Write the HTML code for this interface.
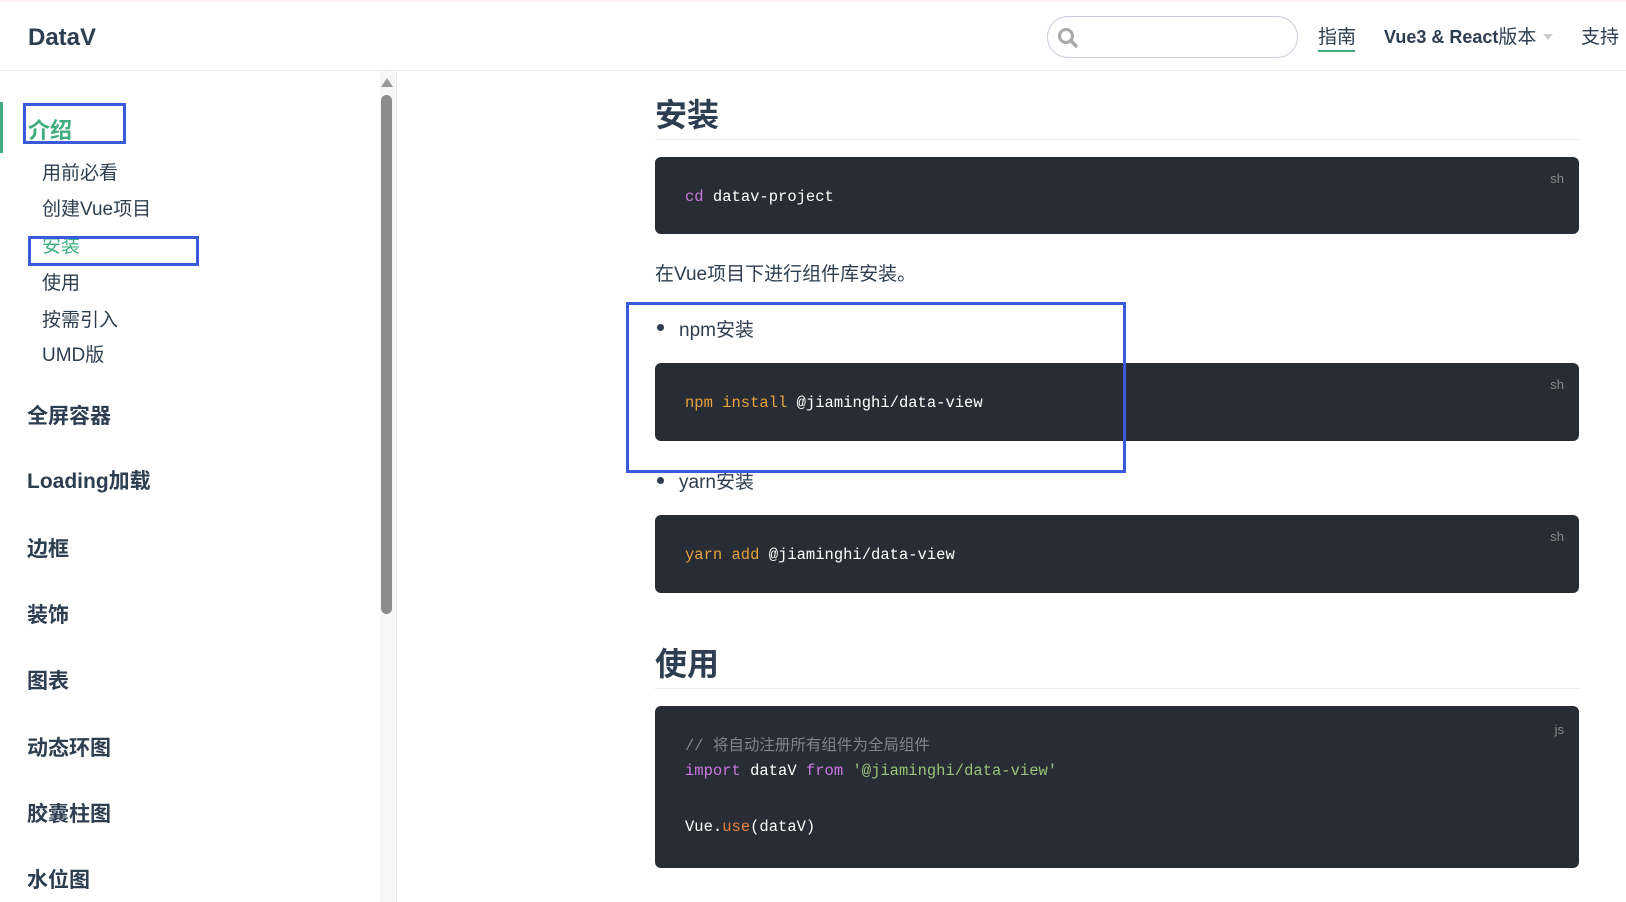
<!DOCTYPE html>
<html><head><meta charset="utf-8"><style>
*{margin:0;padding:0;box-sizing:border-box}
body{width:1626px;height:902px;overflow:hidden;background:#fff;font-family:"Liberation Sans","Noto Sans CJK SC",sans-serif;color:#2c3e50;position:relative}
.a{position:absolute;white-space:nowrap}
.hdr{position:absolute;left:0;top:0;width:1626px;height:71px;border-bottom:1px solid #eaecef;border-top:2px solid #fdf3f3}
.sub{font-size:19px;color:#2c3e50;left:42px;line-height:24px}
.sec{font-size:21px;font-weight:bold;left:27px;line-height:26px}
.code{position:absolute;left:655px;width:924px;background:#282c34;border-radius:6px;font-family:"Liberation Mono","Noto Sans CJK SC",monospace;font-size:15.5px;color:#fff}
.code .l{position:absolute;left:30px;white-space:pre}
.code .lang{position:absolute;right:15px;top:14px;font-size:13px;color:#888;font-family:"Liberation Sans",sans-serif}
.box{position:absolute;border:3px solid #3a5bd9}
.h2{font-size:32px;font-weight:bold;left:655px}
.hr{position:absolute;left:655px;width:924px;height:1px;background:#eaecef}
</style></head><body>
<div class="hdr"></div>
<div class="a" style="left:28px;top:24px;font-size:24px;font-weight:bold;color:#2c3e50">DataV</div>
<div class="a" style="left:1047px;top:16px;width:251px;height:42px;border:1px solid #ccd;border-radius:21px"></div>
<svg class="a" style="left:1057px;top:27px" width="22" height="22" viewBox="0 0 22 22"><circle cx="9" cy="9" r="6.5" fill="none" stroke="#aaa" stroke-width="3"/><line x1="13.5" y1="13.5" x2="19" y2="19" stroke="#aaa" stroke-width="3.5" stroke-linecap="round"/></svg>
<div class="a" style="left:1318px;top:22px;font-size:19px">指南</div>
<div class="a" style="left:1318px;top:50px;width:37px;height:2px;background:#3eaf7c"></div>
<div class="a" style="left:1384px;top:22px;font-size:18px;font-weight:bold">Vue3 &amp; React<span style="font-weight:normal;font-size:19px">版本</span></div>
<div class="a" style="left:1543px;top:34px;width:0;height:0;border-left:5px solid transparent;border-right:5px solid transparent;border-top:6px solid #ccc"></div>
<div class="a" style="left:1581px;top:22px;font-size:19px">支持</div>

<div class="a" style="left:396px;top:71px;width:1px;height:831px;background:#eaecef"></div>
<div class="a" style="left:380px;top:71px;width:15px;height:831px;background:#f7f7f7"></div>
<div class="a" style="left:381px;top:78px;width:0;height:0;border-left:6px solid transparent;border-right:6px solid transparent;border-bottom:9px solid #999"></div>
<div class="a" style="left:381px;top:95px;width:11px;height:519px;background:#8c8c8c;border-radius:6px"></div>

<div class="a" style="left:0;top:102px;width:3px;height:51px;background:#3eaf7c"></div>
<div class="a" style="left:28px;top:113px;font-size:22px;font-weight:bold;color:#3eaf7c">介绍</div>
<div class="box" style="left:23px;top:103px;width:103px;height:41px"></div>
<div class="a sub" style="top:162px">用前必看</div>
<div class="a sub" style="top:198px">创建Vue项目</div>
<div class="a sub" style="top:235px;color:#3eaf7c">安装</div>
<div class="box" style="left:28px;top:236px;width:171px;height:30px"></div>
<div class="a sub" style="top:272px">使用</div>
<div class="a sub" style="top:309px">按需引入</div>
<div class="a sub" style="top:344px">UMD版</div>
<div class="a sec" style="top:404px">全屏容器</div>
<div class="a sec" style="top:469px">Loading加载</div>
<div class="a sec" style="top:537px">边框</div>
<div class="a sec" style="top:603px">装饰</div>
<div class="a sec" style="top:669px">图表</div>
<div class="a sec" style="top:736px">动态环图</div>
<div class="a sec" style="top:802px">胶囊柱图</div>
<div class="a sec" style="top:868px">水位图</div>

<div class="a h2" style="top:90px">安装</div>
<div class="hr" style="top:139px"></div>
<div class="code" style="top:157px;height:77px"><span class="lang">sh</span><div class="l" style="top:31px"><span style="color:#c678dd">cd</span> datav-project</div></div>
<div class="a" style="left:655px;top:259px;font-size:19px">在Vue项目下进行组件库安装。</div>
<div class="a" style="left:657px;top:324px;width:7px;height:7px;border-radius:50%;background:#2c3e50"></div>
<div class="a" style="left:679px;top:315px;font-size:19px">npm安装</div>
<div class="code" style="top:363px;height:78px"><span class="lang">sh</span><div class="l" style="top:31px"><span style="color:#e6a23c">npm install</span> @jiaminghi/data-view</div></div>
<div class="a" style="left:657px;top:477px;width:7px;height:7px;border-radius:50%;background:#2c3e50"></div>
<div class="a" style="left:679px;top:467px;font-size:19px">yarn安装</div>
<div class="box" style="left:626px;top:302px;width:500px;height:171px"></div>
<div class="code" style="top:515px;height:78px"><span class="lang">sh</span><div class="l" style="top:31px"><span style="color:#e6a23c">yarn add</span> @jiaminghi/data-view</div></div>

<div class="a h2" style="top:639px">使用</div>
<div class="hr" style="top:688px"></div>
<div class="code" style="top:706px;height:162px"><span class="lang" style="top:16px">js</span>
<div class="l" style="top:27px;color:#7f848e">// 将自动注册所有组件为全局组件</div>
<div class="l" style="top:56px"><span style="color:#c678dd">import</span> dataV <span style="color:#c678dd">from</span> <span style="color:#98c379">'@jiaminghi/data-view'</span></div>
<div class="l" style="top:112px">Vue.<span style="color:#e5803c">use</span>(dataV)</div>
</div>
</body></html>
